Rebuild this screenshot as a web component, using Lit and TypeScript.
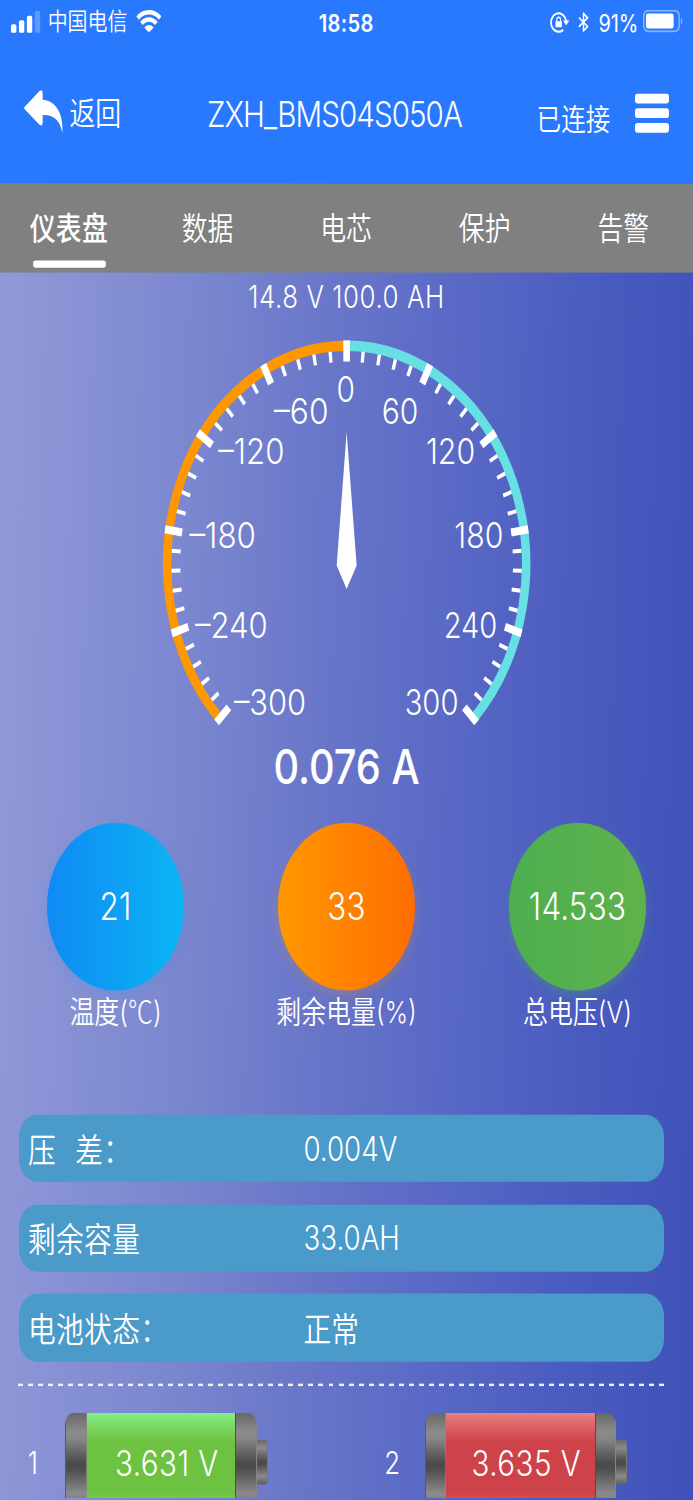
import { LitElement, html, svg, css } from "lit";
import { customElement, property } from "lit/decorators.js";

const RAD = Math.PI / 180;
const CX = 187.5;
const CY = 250.5;
const R = 99.4;

const polar = (r: number, deg: number): [number, number] => [
  CX + r * Math.sin(deg * RAD),
  CY - r * Math.cos(deg * RAD),
];

@customElement("current-gauge")
class CurrentGauge extends LitElement {
  static styles = css`
    :host { display: block; height: 185.6px; }
    svg { display: block; margin: 0 auto; width: 220px; height: 185.6px; overflow: visible; }
    .minus { fill: none; stroke: #ff9800; stroke-width: 4.6; }
    .plus { fill: none; stroke: #67e0e3; stroke-width: 4.6; }
    .major { stroke: #fff; stroke-width: 3.6; }
    .minor { stroke: #fff; stroke-width: 1.8; }
    .needle { fill: #fff; }
    text { fill: #fff; font: 300 16px Inter, "Liberation Sans", sans-serif; text-anchor: middle; }
  `;

  // text, left edge, right edge, vertical centre
  labels: [string, number, number, number][] = [
    ["0", 182.4, 191.6, 172.8],
    ["–60", 148.6, 177.3, 182.5],
    ["60", 206.9, 225.9, 182.5],
    ["–120", 118.4, 153.4, 200.3],
    ["120", 230.8, 256.6, 200.3],
    ["–180", 102.8, 138, 237.4],
    ["180", 246.2, 271.9, 237.4],
    ["–240", 105.8, 144.4, 277.7],
    ["240", 240.4, 268.6, 277.7],
    ["–300", 126.9, 165.2, 311.8],
    ["300", 219.3, 247.6, 311.8],
  ];

  arc(a: number, b: number) {
    const r = R - 2.3;
    const [x1, y1] = polar(r, a);
    const [x2, y2] = polar(r, b);
    return `M${x1} ${y1}A${r} ${r} 0 0 1 ${x2} ${y2}`;
  }

  render() {
    const ticks = [];
    for (let i = -25; i <= 25; i++) {
      const major = i % 5 === 0;
      const a = i * 5.4;
      const [x1, y1] = polar(major ? R + 0.1 : R - 4.6, a);
      const [x2, y2] = polar(major ? R - 9.3 : R - 9.4, a);
      ticks.push(svg`<line class=${major ? "major" : "minor"} x1=${x1} y1=${y1} x2=${x2} y2=${y2} />`);
    }
    return html`<svg viewBox="77.3 142.5 220 185.6">
      <path class="minus" d=${this.arc(-135, 0)} />
      <path class="plus" d=${this.arc(0, 135)} />
      ${ticks}
      ${this.labels.map(([t, l, r, y]) => svg`<text x=${(l + r) / 2} y=${y + 5.8} textLength=${r - l + 0.8} lengthAdjust="spacingAndGlyphs">${t}</text>`)}
      <path class="needle" d="M187.5 191.7L192.9 251.1L187.5 261.6L182.1 251.1Z" />
    </svg>`;
  }
}

@customElement("cell-battery")
class CellBattery extends LitElement {
  @property() value = "";
  @property() tone = "green";

  static styles = css`
    :host { display: flex; height: 45px; width: 110px; align-items: flex-start; }
    .can {
      display: flex; box-sizing: border-box; width: 103.6px; height: 45px;
      border-radius: 5px; overflow: hidden;
    }
    .cap {
      width: 11.6px; box-sizing: border-box;
      background: linear-gradient(#686868, #8b8b8b 19%, #868686 26%, #4a4a4a 50%, #4c4c4c 55%, #8b8b8b 80%, #686868);
    }
    .left { border-left: 0.8px solid #5c5c5c; border-right: 0.8px solid #8f8f8f99; }
    .right { border-left: 0.8px solid #4e4e4e; border-right: 0.8px solid #858585; }
    .body { flex: 1; display: flex; justify-content: center; box-sizing: border-box; padding: 13.8px 0 0 6.2px; }
    .green { background: linear-gradient(#86ee88, #7ad862 14%, #6ec242 28%, #6ec242 80%, #7ad862 90%); }
    .red { background: linear-gradient(#ea8082, #dc6165 14%, #ce4349 28%, #ce4349 80%, #dc6165 90%); }
    .value { font-size: 16px; line-height: 18px; white-space: nowrap; letter-spacing: 0.25px; }
    .nub {
      width: 6px; height: 20.4px; margin-top: 12px; border-radius: 0 2px 2px 0;
      box-sizing: border-box; border-right: 0.8px solid #777;
      background: linear-gradient(#686868, #8b8b8b 19%, #4a4a4a 48%, #4c4c4c 55%, #8b8b8b 82%, #5c5c5c);
    }
  `;

  render() {
    return html`<div class="can">
        <div class="cap left"></div>
        <div class="body ${this.tone}"><span class="value">${this.value}</span></div>
        <div class="cap right"></div>
      </div>
      <div class="nub"></div>`;
  }
}

@customElement("app-root")
class AppRoot extends LitElement {
  static styles = css`
    :host { display: block; width: 693px; height: 1500px; overflow: hidden; }
    .screen {
      zoom: 1.848;
      width: 375px; height: 667px; overflow: hidden;
      transform: scaleY(1.21693); transform-origin: 0 0;
      font-family: Inter, "Noto Sans CJK SC", sans-serif; font-weight: 300; color: #fff;
      background: linear-gradient(92deg, #929bd9, #7985ce 30%, #6573c8 50%, #4c5dc1 80%, #3f51b8);
      display: flex; flex-direction: column; white-space: nowrap;
    }
    .screen > * { flex: none; }
    .zh { font-weight: 350; }
    .top { background: #2979ff; height: 81.5px; }
    .status { height: 20px; display: flex; align-items: center; font-size: 10.8px; line-height: 20px; }
    .signal { width: 16px; height: 10px; margin-left: 6px; position: relative; top: -0.4px; }
    .carrier { margin-left: 3.8px; width: 44px; font-weight: 350; }
    .wifi { width: 14px; height: 10.2px; margin-left: 3.6px; position: relative; top: -0.8px; }
    .time { margin-left: 84.8px; width: 30.4px; font-weight: 600; font-size: 10.9px; letter-spacing: 0.2px; display: flex; justify-content: center; position: relative; top: 0.3px; }
    .lock { width: 10.6px; height: 10px; margin-left: 95px; }
    .bt { width: 6px; height: 9px; margin-left: 4.8px; position: relative; top: -0.3px; }
    .pct { margin-left: 5px; width: 21.4px; font-weight: 400; display: flex; justify-content: center; position: relative; top: 0.3px; }
    .power { width: 22px; height: 10px; margin-left: 2.6px; position: relative; top: -0.5px; }
    .bar { height: 61.5px; padding-bottom: 1.2px; box-sizing: border-box; display: flex; align-items: center; }
    .back { width: 22px; height: 20px; margin-left: 13.2px; position: relative; top: -0.4px; }
    .backtext { font-size: 14px; margin-left: 2.4px; width: 28px; padding-bottom: 1.8px; }
    .title { font-size: 16px; width: 152px; margin-left: 39.4px; display: flex; justify-content: center; letter-spacing: -0.5px; }
    .conn { font-size: 13.3px; margin-left: 33.4px; padding-top: 4px; width: 40px; }
    .menu { width: 18.6px; height: 17.2px; margin-left: 13px; display: flex; flex-direction: column; justify-content: space-between; }
    .menu i { height: 4.2px; border-radius: 1.4px; background: #fff; }
    .tabs { height: 39.9px; background: #808080; display: grid; grid-template-columns: repeat(5, 1fr); font-size: 14px; }
    .tab { position: relative; display: flex; align-items: center; justify-content: center; padding: 0 0.4px 2.2px 0; font-weight: 350; }
    .tab.active { font-weight: 500; letter-spacing: 0.15px; }
    .active::after { content: ""; position: absolute; left: 17.6px; bottom: 2.5px; width: 40px; height: 3px; border-radius: 1.5px; background: #fff; }
    .spec { height: 21.2px; line-height: 21.6px; font-size: 14px; display: flex; justify-content: center; letter-spacing: 0.3px; }
    .amps { height: 25.4px; line-height: 25.4px; font-size: 21.5px; font-weight: 500; display: flex; justify-content: center; }
    .dials { display: grid; grid-template-columns: repeat(3, 1fr); margin-top: 12.4px; }
    .dial { display: flex; flex-direction: column; align-items: center; }
    .disc { width: 74.2px; height: 74.4px; border-radius: 50%; display: flex; align-items: center; justify-content: center; font-size: 17px; letter-spacing: 0.1px; }
    .temp { background: linear-gradient(90deg, #108af5, #0bb5f3); box-shadow: 0 2px 5px #2196f330; }
    .soc { background: linear-gradient(90deg, #ff9800, #ff6d00); box-shadow: 0 2px 5px #ff980038; }
    .volt { background: linear-gradient(90deg, #4caf50, #5fb24b); box-shadow: 0 2px 5px #4caf5050; }
    .cap { height: 19.8px; line-height: 20.2px; font-size: 13.5px; }
    .deg { font-family: "Noto Sans CJK SC", sans-serif; line-height: 1; }
    .rows { margin: 35.5px 15.5px 0 10.1px; display: grid; gap: 9.9px; }
    .row { height: 30px; border-radius: 10px; background: #4a9aca; display: flex; align-items: center; font-size: 15px; }
    .key { width: 149.1px; padding-left: 5px; white-space: pre; letter-spacing: 0.2px; font-weight: 350; }
    .spread { word-spacing: 0.8px; }
    .dash { height: 1px; margin: 9.7px 15.3px 0 10px; background: repeating-linear-gradient(90deg, #f2f2f2 0 2.7px, transparent 2.7px 5.42px); }
    .cells { height: 38px; margin-top: 11.9px; overflow: hidden; display: grid; grid-template-columns: 194.9px 1fr; }
    .cell { display: flex; }
    .no { width: 20.4px; padding-left: 15px; font-size: 14px; line-height: 44px; }
    .second { width: 22px; padding-left: 13px; }
  `;

  render() {
    return html`<div class="screen">
      <div class="top">
        <div class="status">
          <svg class="signal" viewBox="0 0 16 10" fill="#fff">
            <rect x="0" y="5.9" width="2.9" height="4" rx=".9" />
            <rect x="4.3" y="4.1" width="2.9" height="5.8" rx=".9" />
            <rect x="8.6" y="2.1" width="2.9" height="7.8" rx=".9" />
            <rect x="12.9" y="0" width="2.9" height="9.9" rx=".9" opacity=".25" />
          </svg>
          <span class="carrier">中国电信</span>
          <svg class="wifi" viewBox="0 0 14 10.2">
            <path d="M.9 3.7A8.6 8.6 0 0 1 13.1 3.7M3 6.1A5.5 5.5 0 0 1 11 6.1" fill="none" stroke="#fff" stroke-width="2" />
            <path d="M4.5 7.9A3.4 3.4 0 0 1 9.5 7.9L7 10.2Z" fill="#fff" />
          </svg>
          <span class="time">18:58</span>
          <svg class="lock" viewBox="0 0 10.6 10">
            <path d="M7.2 8.4A4.1 4.1 0 1 1 8.7 4.4" fill="none" stroke="#fff" stroke-width=".9" />
            <path d="M7.1 4.3H10.4L8.7 6.5Z" fill="#fff" />
            <rect x="3" y="4.6" width="3.4" height="2.7" rx=".4" fill="#fff" />
            <path d="M3.7 4.8V3.8a1 1 0 0 1 2 0V4.8" fill="none" stroke="#fff" stroke-width=".6" />
          </svg>
          <svg class="bt" viewBox="0 0 6 9">
            <path d="M.5 2.4L5.2 6.4L3 8.3V.6L5.2 2.5L.5 6.5" fill="none" stroke="#fff" stroke-width=".8" />
          </svg>
          <span class="pct">91%</span>
          <svg class="power" viewBox="0 0 22 10">
            <rect x=".4" y=".4" width="19.2" height="9.2" rx="2.4" fill="none" stroke="#fff" stroke-opacity=".45" stroke-width=".8" />
            <rect x="1.6" y="1.7" width="15" height="6.6" rx="1.2" fill="#fff" />
            <path d="M20.6 3.4Q22 5 20.6 6.6Z" fill="#fff" opacity=".5" />
          </svg>
        </div>
        <div class="bar">
          <svg class="back" viewBox="0 0 22 20">
            <path d="M.4 8L8.4 1Q10.1 0 10.1 2V4.9C16.5 5.2 21.6 10.5 20.7 19.4C20 17 19.4 15.5 17.7 13.9C15.6 12 13 11.5 10.1 11.7V15Q10 17 8.4 16L.4 9.1Q-.2 8.5 .4 8Z" fill="#fff" />
          </svg>
          <span class="backtext zh">返回</span>
          <span class="title">ZXH_BMS04S050A</span>
          <span class="conn zh">已连接</span>
          <div class="menu"><i></i><i></i><i></i></div>
        </div>
      </div>
      <div class="tabs">
        <div class="tab active">仪表盘</div>
        <div class="tab">数据</div>
        <div class="tab">电芯</div>
        <div class="tab">保护</div>
        <div class="tab">告警</div>
      </div>
      <div class="spec">14.8 V 100.0 AH</div>
      <current-gauge></current-gauge>
      <div class="amps">0.076 A</div>
      <div class="dials">
        <div class="dial"><div class="disc temp">21</div><div class="cap"><span class="zh">温度</span>(<span class="deg">℃</span>)</div></div>
        <div class="dial"><div class="disc soc">33</div><div class="cap"><span class="zh">剩余电量</span>(%)</div></div>
        <div class="dial"><div class="disc volt">14.533</div><div class="cap"><span class="zh">总电压</span>(V)</div></div>
      </div>
      <div class="rows">
        <div class="row"><span class="key spread">压  差：</span><span>0.004V</span></div>
        <div class="row"><span class="key">剩余容量</span><span>33.0AH</span></div>
        <div class="row"><span class="key">电池状态：</span><span class="zh">正常</span></div>
      </div>
      <div class="dash"></div>
      <div class="cells">
        <div class="cell"><span class="no">1</span><cell-battery value="3.631 V" tone="green"></cell-battery></div>
        <div class="cell"><span class="no second">2</span><cell-battery value="3.635 V" tone="red"></cell-battery></div>
      </div>
    </div>`;
  }
}
